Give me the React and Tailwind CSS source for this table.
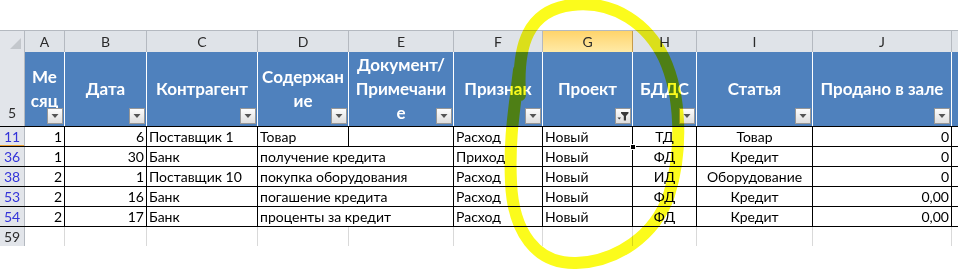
import React from 'react'

const cols = [
    { id: 'A', w: 'w-[40px]', title: ['Ме', 'сяц'], align: 'justify-end' },
    { id: 'B', w: 'w-[82px]', title: ['Дата'], align: 'justify-end' },
    { id: 'C', w: 'w-[111px]', title: ['Контрагент'], align: 'justify-start' },
    { id: 'D', w: 'w-[91px]', title: ['Содержан', 'ие'], align: 'justify-start' },
    { id: 'E', w: 'w-[105px]', title: ['Документ/', 'Примечани', 'е'], align: 'justify-start' },
    { id: 'F', w: 'w-[89px]', title: ['Признак'], align: 'justify-start' },
    { id: 'G', w: 'w-[90px]', title: ['Проект'], align: 'justify-start', filtered: true },
    { id: 'H', w: 'w-[64px]', title: ['БДДС'], align: 'justify-center' },
    { id: 'I', w: 'w-[116px]', title: ['Статья'], align: 'justify-center' },
    { id: 'J', w: 'w-[139px]', title: ['Продано в зале'], align: 'justify-end' },
]

const rows = [
    { n: '11', cells: ['1', '6', 'Поставщик 1', 'Товар', '', 'Расход', 'Новый', 'ТД', 'Товар', '0'], split: true },
    { n: '36', cells: ['1', '30', 'Банк', 'получение кредита', '', 'Приход', 'Новый', 'ФД', 'Кредит', '0'] },
    { n: '38', cells: ['2', '1', 'Поставщик 10', 'покупка оборудования', '', 'Расход', 'Новый', 'ИД', 'Оборудование', '0'] },
    { n: '53', cells: ['2', '16', 'Банк', 'погашение кредита', '', 'Расход', 'Новый', 'ФД', 'Кредит', '0,00'] },
    { n: '54', cells: ['2', '17', 'Банк', 'проценты за кредит', '', 'Расход', 'Новый', 'ФД', 'Кредит', '0,00'] },
]

const FilterBtn = ({ active }) => (
    <span className="absolute right-[1px] bottom-[2px] w-[16px] h-[16px] border border-[#979797] bg-linear-to-b from-[#fdfdfd] to-[#dedede] flex items-center justify-center">
        {active ? (
            <svg width="12" height="10" viewBox="0 0 12 10">
                <path d="M4 1h7.5v1.2L9 5v4.5H6.8V5L4 2.2z" fill="#3a3a3a" />
                <path d="M0.5 6.5h3.5L2.25 8.5z" fill="#3a3a3a" />
            </svg>
        ) : (
            <svg width="8" height="4" viewBox="0 0 8 4">
                <path d="M0.5 0h7L4 4z" fill="#555" />
            </svg>
        )}
    </span>
)

const App = () => {
    return (
        <div className="relative w-[958px] h-[275px] overflow-hidden bg-white font-['Lato',_'Liberation_Sans',_sans-serif]">
            <div className="h-[30px]" />

            {/* column letters */}
            <div className="flex h-[22px] border-t border-[#b4b9c0] bg-[#dfe3e8] text-[14px] text-[#2b2b2b]">
                <div className="relative w-[25px] border-r border-[#b4b9c0] bg-[#e2e5ea]">
                    <svg className="absolute right-[3px] bottom-[3px]" width="11" height="11" viewBox="0 0 11 11">
                        <path d="M11 0v11H0z" fill="#c3c7cc" />
                    </svg>
                </div>
                {cols.map(c => (
                    <div
                        key={c.id}
                        className={`${c.w} flex items-center justify-center border-r ${c.id === 'G' ? 'border-[#c69a4a] bg-linear-to-b from-[#ffd46a] to-[#ffeaa6]' : 'border-[#b4b9c0]'}`}
                    >
                        {c.id}
                    </div>
                ))}
                <div className="flex-1" />
            </div>

            {/* header row 5 */}
            <div className="flex h-[75px] border-b border-black">
                <div className="w-[25px] flex items-end justify-center pb-[3px] border-r border-[#b4b9c0] bg-[#e2e5ea] text-[14px] text-[#2b2b2b]">5</div>
                {cols.map(c => (
                    <div key={c.id} className={`${c.w} relative flex flex-col items-center justify-center bg-[#4f81bd] border-r border-white text-white font-bold text-[17px] leading-[24px]`}>
                        {c.title.map((t, i) => <span key={i} className="whitespace-nowrap">{t}</span>)}
                        <FilterBtn active={c.filtered} />
                    </div>
                ))}
                <div className="flex-1 bg-[#4f81bd]" />
            </div>

            {/* data rows */}
            {rows.map((r, ri) => (
                <div key={r.n} className="flex h-[20px] border-b border-black text-[14px] text-black leading-[19px]">
                    <div className={`w-[25px] flex items-center justify-center border-r border-[#b4b9c0] bg-[#e2e5ea] text-[#3434d8] ${ri === 0 ? 'shadow-[inset_0_-1px_0_#f0a43a]' : ''}`}>{r.n}</div>
                    {cols.map((c, ci) => {
                        const noRight = c.id === 'D' && !r.split
                        return (
                            <div
                                key={c.id}
                                className={`${c.w} relative flex items-center ${c.align} px-[2px] whitespace-nowrap border-r ${noRight ? 'border-transparent' : 'border-black'}`}
                            >
                                {r.cells[ci]}
                                {ri === 0 && c.id === 'G' && (
                                    <span className="absolute right-[-4px] bottom-[-4px] w-[6px] h-[6px] bg-black border border-white z-10" />
                                )}
                            </div>
                        )
                    })}
                    <div className="flex-1" />
                </div>
            ))}

            {/* row 59 */}
            <div className="flex h-[19px] text-[14px]">
                <div className="w-[25px] flex items-center justify-center border-r border-[#b4b9c0] bg-[#e2e5ea] text-[#2b2b2b]">59</div>
                {cols.map(c => (
                    <div key={c.id} className={`${c.w} border-r border-[#d9d9d9]`} />
                ))}
                <div className="flex-1" />
            </div>

            {/* highlighter loop */}
            <svg className="absolute inset-0 pointer-events-none mix-blend-multiply" width="958" height="275" viewBox="0 0 958 275">
                <path
                    d="M520 95 C517 45, 528 10, 572 5 C615 0, 648 25, 664 58 C681 95, 683 150, 669 195 C655 236, 616 262, 576 263 C536 264, 513 232, 511 182 C509 140, 514 112, 519 70"
                    fill="none"
                    stroke="#fbfb1c"
                    strokeWidth="12"
                    strokeLinecap="round"
                />
            </svg>
        </div>
    )
}

export default App
